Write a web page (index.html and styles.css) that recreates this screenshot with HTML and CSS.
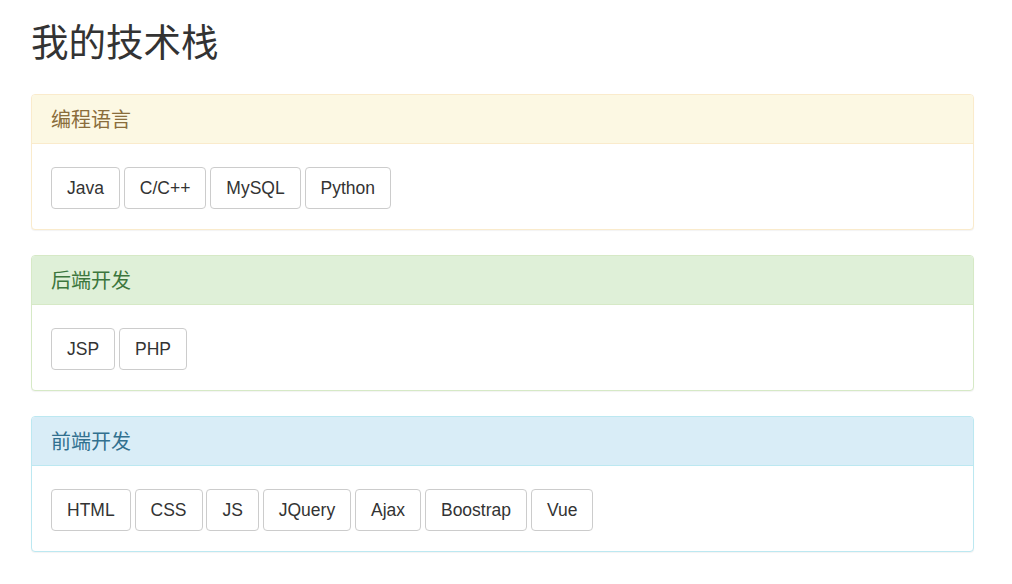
FILE: index.html
```html
<!DOCTYPE html>
<html lang="zh-CN">
<head>
<meta charset="utf-8">
<title>我的技术栈</title>
<link rel="stylesheet" href="styles.css">
</head>
<body>
<div class="page">
  <h1 class="title">我的技术栈</h1>

  <div class="panel panel-warning">
    <div class="panel-heading">编程语言</div>
    <div class="panel-body">
      <span class="btn">Java</span>
      <span class="btn">C/C++</span>
      <span class="btn">MySQL</span>
      <span class="btn">Python</span>
    </div>
  </div>

  <div class="panel panel-success">
    <div class="panel-heading">后端开发</div>
    <div class="panel-body">
      <span class="btn">JSP</span>
      <span class="btn">PHP</span>
    </div>
  </div>

  <div class="panel panel-info">
    <div class="panel-heading">前端开发</div>
    <div class="panel-body">
      <span class="btn">HTML</span>
      <span class="btn">CSS</span>
      <span class="btn">JS</span>
      <span class="btn">JQuery</span>
      <span class="btn">Ajax</span>
      <span class="btn">Boostrap</span>
      <span class="btn">Vue</span>
    </div>
  </div>
</div>
</body>
</html>
```

FILE: styles.css
```css
html, body {
  margin: 0;
  padding: 0;
  background: #fff;
}

body {
  font-family: "Liberation Sans", Arial, "Noto Sans CJK SC", sans-serif;
  font-size: 14px;
  color: #333;
}

.page {
  padding: 20px 38px 0 31px;
}

.title {
  margin: 0 0 34px 0;
  font-family: "Noto Sans CJK SC", "Liberation Sans", sans-serif;
  font-size: 37.5px;
  font-weight: 400;
  line-height: 40px;
  color: #333;
}

.panel {
  width: 941px;
  margin-bottom: 25px;
  background: #fff;
  border: 1px solid transparent;
  border-radius: 4px;
  box-shadow: 0 1px 1px rgba(0, 0, 0, 0.05);
}

.panel-heading {
  padding: 12px 19px;
  line-height: 24px;
  font-family: "Noto Sans CJK SC", "Liberation Sans", sans-serif;
  font-size: 20px;
  border-bottom: 1px solid transparent;
  border-top-left-radius: 3px;
  border-top-right-radius: 3px;
}

.panel-body {
  padding: 23px 19px 20px 19px;
  font-size: 14px;
  line-height: 0;
}

.btn {
  display: inline-block;
  padding: 10px 15px;
  font-family: "Liberation Sans", Arial, sans-serif;
  font-size: 17.5px;
  line-height: 20px;
  color: #333;
  background: #fff;
  border: 1px solid #ccc;
  border-radius: 4px;
  vertical-align: top;
}

.panel-warning { border-color: #faebcc; }
.panel-warning .panel-heading {
  color: #8a6d3b;
  background: #fcf8e3;
  border-bottom-color: #faebcc;
}

.panel-success { border-color: #d6e9c6; }
.panel-success .panel-heading {
  color: #3c763d;
  background: #dff0d8;
  border-bottom-color: #d6e9c6;
}

.panel-info { border-color: #bce8f1; }
.panel-info .panel-heading {
  color: #31708f;
  background: #d9edf7;
  border-bottom-color: #bce8f1;
}
```
